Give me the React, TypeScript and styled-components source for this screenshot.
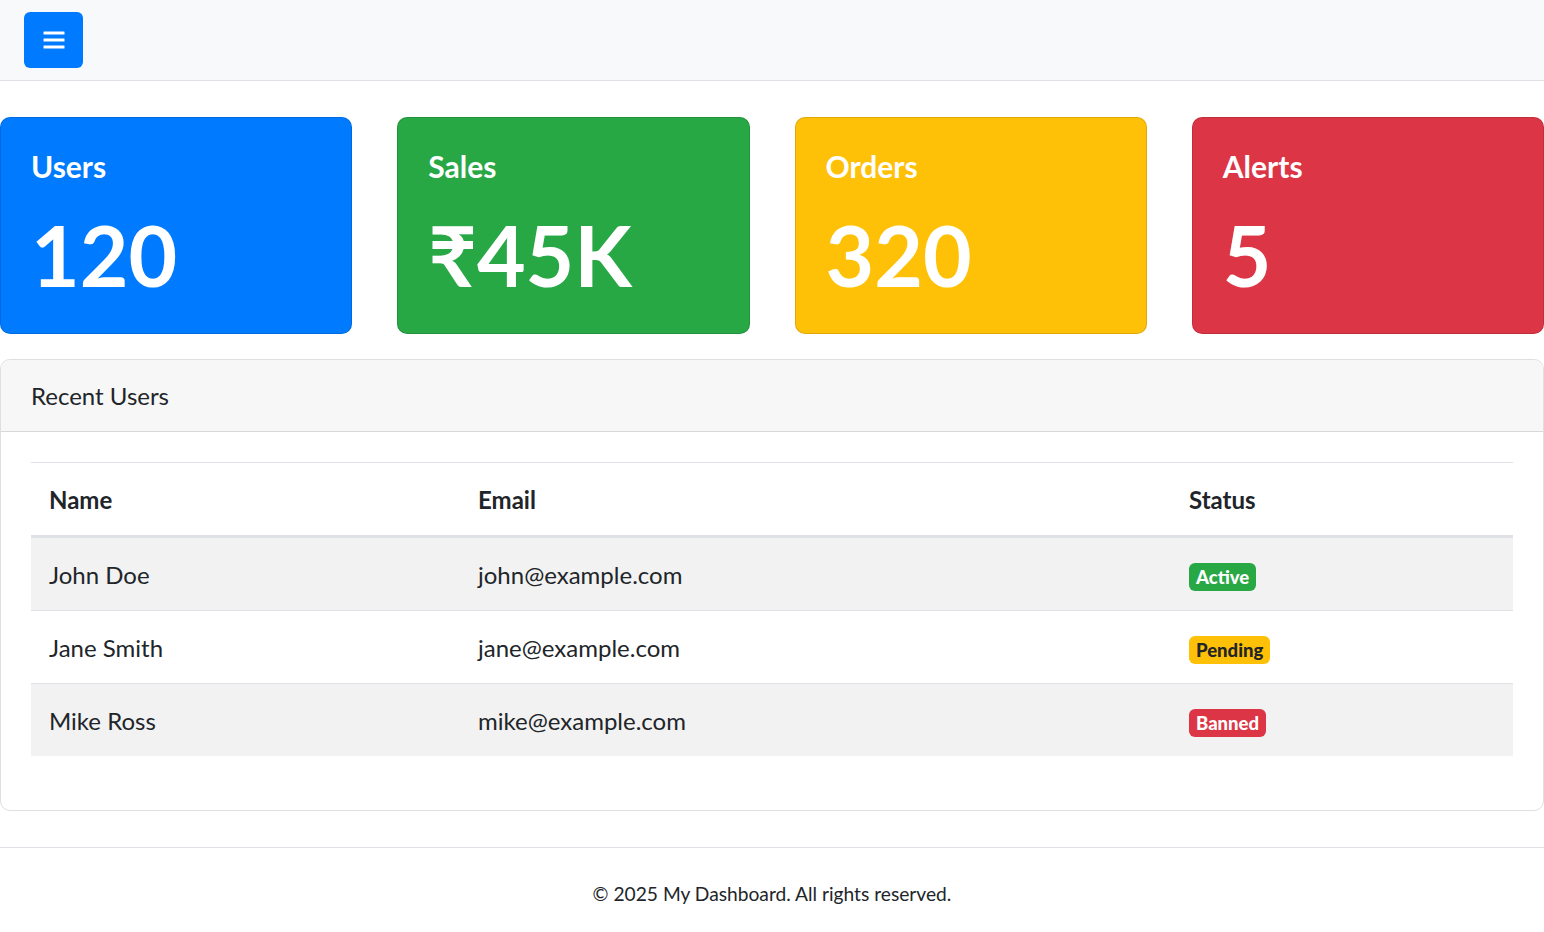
import React from "react";
import styled, { createGlobalStyle } from "styled-components";

const GlobalStyle = createGlobalStyle`
  * { box-sizing: border-box; }
  html, body { margin: 0; padding: 0; background: #fff; }
  body {
    font-family: Lato, "Noto Sans", "Liberation Sans", sans-serif;
    font-size: 24px;
    line-height: 36px;
    color: #212529;
  }
`;

const TopBar = styled.header`
  height: 81px;
  background: #f8f9fa;
  border-bottom: 1px solid #dee2e6;
  padding: 12px 24px;
  display: flex;
  align-items: flex-start;
`;

const MenuButton = styled.button`
  width: 59px;
  height: 56px;
  border: none;
  border-radius: 6px;
  background: #007bff;
  display: flex;
  align-items: center;
  justify-content: center;
  padding: 0;
  cursor: pointer;
`;

const Main = styled.main`
  padding-top: 36px;
`;

const StatGrid = styled.section`
  display: grid;
  grid-template-columns: repeat(4, 1fr);
  column-gap: 45px;
  margin-bottom: 25px;
`;

const StatCard = styled.div<{ $bg: string; $fg: string }>`
  height: 217px;
  background: ${(p) => p.$bg};
  color: ${(p) => p.$fg};
  border: 1px solid rgba(0, 0, 0, 0.125);
  border-radius: 10px;
  padding: 30px;
  display: flex;
  flex-direction: column;
`;

const StatTitle = styled.h5`
  margin: 0 0 21px;
  font-size: 30px;
  line-height: 36px;
  font-weight: 700;
`;

const StatValue = styled.div`
  font-size: 84px;
  line-height: 100px;
  font-weight: 700;
`;

const Panel = styled.section`
  border: 1px solid rgba(0, 0, 0, 0.125);
  border-radius: 10px;
  overflow: hidden;
`;

const PanelHeader = styled.div`
  background: #f7f7f7;
  border-bottom: 1px solid rgba(0, 0, 0, 0.125);
  padding: 18px 30px 17px;
  font-size: 24px;
  line-height: 36px;
`;

const PanelBody = styled.div`
  padding: 30px 30px 30px;
`;

const Table = styled.table`
  width: 100%;
  border-collapse: collapse;
  table-layout: fixed;
  margin-bottom: 24px;
`;

const HeadCell = styled.th`
  text-align: left;
  font-weight: 700;
  padding: 19px 18px 17px;
  border-top: 1px solid #dee2e6;
  border-bottom: 3px solid #dee2e6;
  line-height: 36px;
`;

const Row = styled.tr<{ $striped: boolean }>`
  background: ${(p) => (p.$striped ? "#f2f2f2" : "transparent")};
`;

const Cell = styled.td`
  padding: 19px 18px 17px;
  border-top: 1px solid #dee2e6;
  line-height: 36px;
`;

const Badge = styled.span<{ $bg: string; $fg: string }>`
  display: inline-block;
  background: ${(p) => p.$bg};
  color: ${(p) => p.$fg};
  font-size: 18.5px;
  font-weight: 900;
  line-height: 1;
  padding: 4.5px 7px;
  border-radius: 6px;
  vertical-align: middle;
  position: relative;
  top: -1px;
`;

const Footer = styled.footer`
  margin-top: 36px;
  border-top: 1px solid #dee2e6;
  padding: 31px 0;
  text-align: center;
  font-size: 19.2px;
  line-height: 29px;
`;

const stats = [
  { title: "Users", value: "120", bg: "#007bff", fg: "#fff" },
  { title: "Sales", value: "₹45K", bg: "#28a745", fg: "#fff" },
  { title: "Orders", value: "320", bg: "#ffc107", fg: "#fff" },
  { title: "Alerts", value: "5", bg: "#dc3545", fg: "#fff" },
];

const statusStyles: Record<string, { bg: string; fg: string }> = {
  Active: { bg: "#28a745", fg: "#fff" },
  Pending: { bg: "#ffc107", fg: "#212529" },
  Banned: { bg: "#dc3545", fg: "#fff" },
};

const users = [
  { name: "John Doe", email: "john@example.com", status: "Active" },
  { name: "Jane Smith", email: "jane@example.com", status: "Pending" },
  { name: "Mike Ross", email: "mike@example.com", status: "Banned" },
];

const BarsIcon = () => (
  <svg width="22" height="18" viewBox="0 0 22 18" fill="#fff">
    <rect x="0.5" y="0.5" width="21" height="3" rx="0.5" />
    <rect x="0.5" y="7.5" width="21" height="3" rx="0.5" />
    <rect x="0.5" y="14.5" width="21" height="3" rx="0.5" />
  </svg>
);

export default function App() {
  return (
    <>
      <GlobalStyle />
      <TopBar>
        <MenuButton aria-label="Menu">
          <BarsIcon />
        </MenuButton>
      </TopBar>
      <Main>
        <StatGrid>
          {stats.map((s) => (
            <StatCard key={s.title} $bg={s.bg} $fg={s.fg}>
              <StatTitle>{s.title}</StatTitle>
              <StatValue>{s.value}</StatValue>
            </StatCard>
          ))}
        </StatGrid>
        <Panel>
          <PanelHeader>Recent Users</PanelHeader>
          <PanelBody>
            <Table>
              <colgroup>
                <col style={{ width: "429px" }} />
                <col style={{ width: "711px" }} />
                <col />
              </colgroup>
              <thead>
                <tr>
                  <HeadCell>Name</HeadCell>
                  <HeadCell>Email</HeadCell>
                  <HeadCell>Status</HeadCell>
                </tr>
              </thead>
              <tbody>
                {users.map((u, i) => (
                  <Row key={u.email} $striped={i % 2 === 0}>
                    <Cell>{u.name}</Cell>
                    <Cell>{u.email}</Cell>
                    <Cell>
                      <Badge $bg={statusStyles[u.status].bg} $fg={statusStyles[u.status].fg}>
                        {u.status}
                      </Badge>
                    </Cell>
                  </Row>
                ))}
              </tbody>
            </Table>
          </PanelBody>
        </Panel>
      </Main>
      <Footer>© 2025 My Dashboard. All rights reserved.</Footer>
    </>
  );
}
